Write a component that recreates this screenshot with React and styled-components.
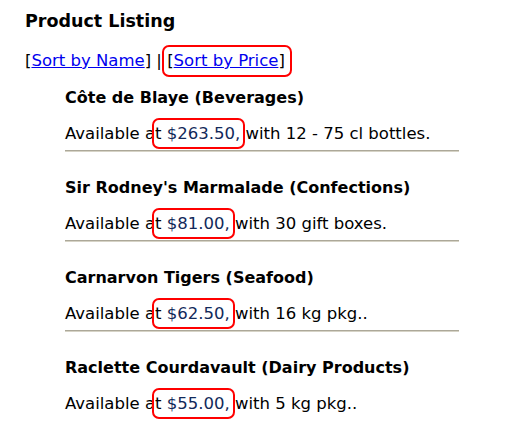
import React from 'react';
import styled, { createGlobalStyle } from 'styled-components';

const GlobalStyle = createGlobalStyle`
    body {
        margin: 0;
        background: #fff;
        font-family: Verdana, "DejaVu Sans", sans-serif;
        color: #000;
    }
`;

const products = [
    { name: 'Côte de Blaye', category: 'Beverages', price: '$263.50', unit: '12 - 75 cl bottles' },
    { name: "Sir Rodney's Marmalade", category: 'Confections', price: '$81.00', unit: '30 gift boxes' },
    { name: 'Carnarvon Tigers', category: 'Seafood', price: '$62.50', unit: '16 kg pkg.' },
    { name: 'Raclette Courdavault', category: 'Dairy Products', price: '$55.00', unit: '5 kg pkg.' },
];

const Page = styled.div`
    padding: 10px 25px;
`;

const Title = styled.h2`
    margin: 0;
    font-size: 17.5px;
    font-weight: bold;
    line-height: 22px;
`;

const SortBar = styled.div`
    margin-top: 13px;
    font-size: 16.5px;
    line-height: 20px;
    display: flex;
    align-items: center;
    white-space: pre;

    a {
        color: #0000ee;
        text-decoration: underline;
    }
`;

const SortLink = styled.span`
    padding: 4px 5px 4px 3px;
    border: 2px solid ${props => props.marked ? '#ff0000' : 'transparent'};
    border-radius: 7px;
    margin: 0 -7px 0 -5px;
`;

const List = styled.div`
    padding-left: 40px;
    margin-top: 11px;
    width: 394px;
`;

const Item = styled.div`
    margin-bottom: 26px;
`;

const Name = styled.div`
    font-size: 16px;
    font-weight: bold;
    line-height: 20px;
`;

const Line = styled.div`
    margin-top: 16px;
    font-size: 16.5px;
    line-height: 20px;
    white-space: pre;
`;

const Price = styled.span`
    color: #12295a;
    border: 2px solid #ff0000;
    border-radius: 7px;
    padding: 4px 3px 4px 13px;
    margin: 0 -5px 0 -15px;
`;

const Rule = styled.hr`
    margin: 6px 0 0;
    border: 0;
    border-top: 1px solid #aca899;
    border-bottom: 1px solid #d6d3c6;
    height: 0;
`;

const App = () => {
    return (
        <Page>
            <GlobalStyle />
            <Title>Product Listing</Title>
            <SortBar>
                <span>[<a href="#">Sort by Name</a>] | </span>
                <SortLink marked>[<a href="#">Sort by Price</a>]</SortLink>
            </SortBar>
            <List>
                {products.map((p, i) => (
                    <Item key={p.name}>
                        <Name>{p.name} ({p.category})</Name>
                        <Line>Available at <Price>{p.price},</Price> with {p.unit}.</Line>
                        {i < products.length - 1 && <Rule />}
                    </Item>
                ))}
            </List>
        </Page>
    );
};

export default App;
